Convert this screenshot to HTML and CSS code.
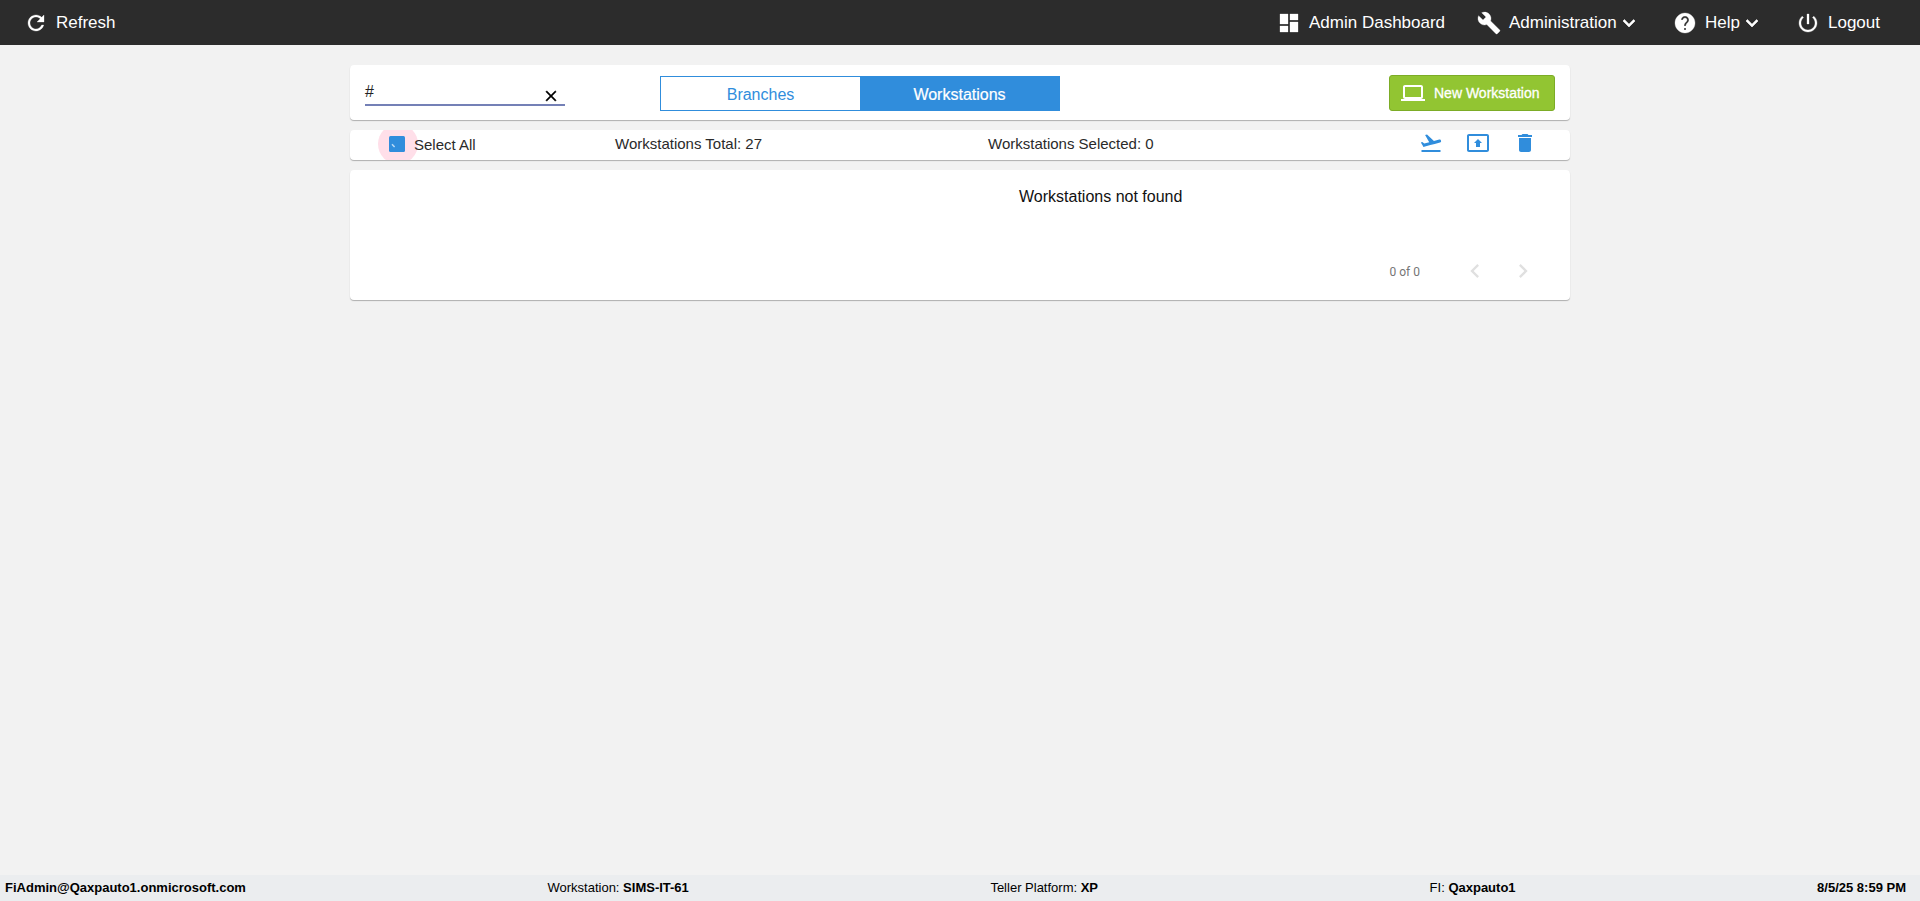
FILE: index.html
```
<!DOCTYPE html>
<html lang="en">
<head>
    <meta charset="UTF-8">
    <meta name="viewport" content="width=device-width, initial-scale=1.0">
    <title>Workstations</title>
    <link rel="stylesheet" href="styles.css">
</head>
<body>
    <header class="topbar">
        <a class="nav-item refresh">
            <svg class="icon" viewBox="0 0 24 24"><path d="M17.65 6.35C16.2 4.9 14.21 4 12 4c-4.42 0-7.99 3.58-7.99 8s3.57 8 7.99 8c3.73 0 6.84-2.55 7.73-6h-2.08c-.82 2.33-3.04 4-5.65 4-3.31 0-6-2.69-6-6s2.69-6 6-6c1.66 0 3.14.69 4.22 1.78L13 11h7V4l-2.35 2.35z"/></svg>
            <span>Refresh</span>
        </a>
        <nav class="menu">
            <a class="nav-item dashboard">
                <svg class="icon" viewBox="0 0 24 24"><path d="M3 13h8V3H3v10zm0 8h8v-6H3v6zm10 0h8V11h-8v10zm0-18v6h8V3h-8z"/></svg>
                <span>Admin Dashboard</span>
            </a>
            <a class="nav-item administration">
                <svg class="icon" viewBox="0 0 24 24"><path d="M22.7 19l-9.1-9.1c.9-2.3.4-5-1.5-6.9-2-2-5-2.4-7.4-1.3L9 6 6 9 1.6 4.7C.4 7.1.9 10.1 2.9 12.1c1.9 1.9 4.6 2.4 6.9 1.5l9.1 9.1c.4.4 1 .4 1.4 0l2.3-2.3c.5-.4.5-1.1.1-1.4z"/></svg>
                <span>Administration</span>
                <svg class="icon arrow" viewBox="0 0 24 24"><path d="M16.59 8.59L12 13.17 7.41 8.59 6 10l6 6 6-6z"/></svg>
            </a>
            <a class="nav-item help">
                <svg class="icon" viewBox="0 0 24 24"><path d="M12 2C6.48 2 2 6.48 2 12s4.48 10 10 10 10-4.48 10-10S17.52 2 12 2zm1 17h-2v-2h2v2zm2.07-7.75l-.9.92C13.45 12.9 13 13.5 13 15h-2v-.5c0-1.1.45-2.1 1.17-2.83l1.24-1.26c.37-.36.59-.86.59-1.41 0-1.1-.9-2-2-2s-2 .9-2 2H8c0-2.21 1.79-4 4-4s4 1.79 4 4c0 .88-.36 1.68-.93 2.25z"/></svg>
                <span>Help</span>
                <svg class="icon arrow" viewBox="0 0 24 24"><path d="M16.59 8.59L12 13.17 7.41 8.59 6 10l6 6 6-6z"/></svg>
            </a>
            <a class="nav-item logout">
                <svg class="icon" viewBox="0 0 24 24"><path d="M13 3h-2v10h2V3zm4.83 2.17l-1.42 1.42C17.99 7.86 19 9.81 19 12c0 3.87-3.13 7-7 7s-7-3.13-7-7c0-2.19 1.01-4.14 2.58-5.42L6.17 5.17C4.23 6.82 3 9.26 3 12c0 4.97 4.03 9 9 9s9-4.03 9-9c0-2.74-1.23-5.18-3.17-6.83z"/></svg>
                <span>Logout</span>
            </a>
        </nav>
    </header>

    <main class="container">
        <section class="card filter-bar">
            <div class="search">
                <span class="search-value">#</span>
                <svg class="clear" viewBox="0 0 24 24"><path d="M19 6.41L17.59 5 12 10.59 6.41 5 5 6.41 10.59 12 5 17.59 6.41 19 12 13.41 17.59 19 19 17.59 13.41 12z"/></svg>
            </div>
            <div class="tabs">
                <button class="tab-button">Branches</button>
                <button class="tab-button active">Workstations</button>
            </div>
            <button class="new-button">
                <svg class="icon" viewBox="0 0 24 24"><path d="M20 18c1.1 0 1.99-.9 1.99-2L22 6c0-1.1-.9-2-2-2H4c-1.1 0-2 .9-2 2v10c0 1.1.9 2 2 2H0v2h24v-2h-4zM4 6h16v10H4V6z"/></svg>
                <span>New Workstation</span>
            </button>
        </section>

        <section class="card select-bar">
            <div class="ripple">
                <svg class="checkbox" viewBox="0 0 16 16"><rect width="16" height="16" rx="1.5"/><path d="M3 8.2l2.6 2.9"/></svg>
            </div>
            <span class="select-all">Select All</span>
            <span class="total">Workstations Total: 27</span>
            <span class="selected">Workstations Selected: 0</span>
            <div class="actions">
                <svg class="icon" viewBox="0 0 24 24"><path d="M2.5 19h19v2h-19zm19.57-9.36c-.21-.8-1.04-1.28-1.84-1.06L14.92 10l-6.9-6.43-1.93.51 4.14 7.17-4.97 1.33-1.97-1.54-1.45.39 1.82 3.16.77 1.33 1.6-.43 5.31-1.42 4.35-1.16L21 11.49c.81-.23 1.28-1.05 1.07-1.85z"/></svg>
                <svg class="icon" viewBox="0 0 24 24"><path d="M21 3H3c-1.11 0-2 .89-2 2v14c0 1.11.89 2 2 2h18c1.11 0 2-.89 2-2V5c0-1.11-.89-2-2-2zm0 16.02H3V4.98h18v14.04zM10 12H8l4-4 4 4h-2v4h-4v-4z"/></svg>
                <svg class="icon" viewBox="0 0 24 24"><path d="M6 19c0 1.1.9 2 2 2h8c1.1 0 2-.9 2-2V7H6v12zM19 4h-3.5l-1-1h-5l-1 1H5v2h14V4z"/></svg>
            </div>
        </section>

        <section class="card list">
            <p class="empty">Workstations not found</p>
            <div class="paginator">
                <span class="range">0 of 0</span>
                <svg class="page-icon" viewBox="0 0 24 24"><path d="M15.41 7.41L14 6l-6 6 6 6 1.41-1.41L10.83 12z"/></svg>
                <svg class="page-icon" viewBox="0 0 24 24"><path d="M10 6L8.59 7.41 13.17 12l-4.58 4.59L10 18l6-6z"/></svg>
            </div>
        </section>
    </main>

    <footer class="statusbar">
        <b>FiAdmin@Qaxpauto1.onmicrosoft.com</b>
        <span>Workstation: <b>SIMS-IT-61</b></span>
        <span class="platform">Teller Platform: <b>XP</b></span>
        <span>FI: <b>Qaxpauto1</b></span>
        <b>8/5/25 8:59 PM</b>
    </footer>
</body>
</html>
```
FILE: styles.css
```
* {
    box-sizing: border-box;
}
body {
    font-family: "Liberation Sans", Arial, sans-serif;
    background-color: #f2f2f2;
    display: flex;
    flex-direction: column;
    height: 100vh;
    margin: 0;
    overflow: hidden;
}
svg {
    display: block;
    fill: currentColor;
    flex: none;
}
button {
    font-family: inherit;
    cursor: pointer;
}
.icon {
    width: 24px;
    height: 24px;
}

/* top bar */
.topbar {
    display: flex;
    justify-content: space-between;
    height: 45px;
    padding: 0 39px 0 24px;
    background-color: #2c2c2c;
    color: #fff;
    font-size: 17px;
}
.menu {
    display: flex;
}
.nav-item {
    display: flex;
    align-items: center;
    gap: 8px;
    white-space: nowrap;
}
.nav-item .icon {
    stroke: currentColor;
    stroke-width: 0.3px;
}
.dashboard {
    width: 200px;
}
.administration {
    width: 196px;
}
.help {
    width: 123px;
}
.logout {
    width: 85px;
}
.nav-item .arrow {
    margin-left: -8px;
    stroke-width: 0.6px;
}

/* cards */
.container {
    width: 1220px;
    margin: 20px auto 0;
    flex: 1;
}
.card {
    display: flex;
    background-color: #fff;
    border-radius: 4px;
    box-shadow: 0 1px 1px rgba(0, 0, 0, 0.28);
    margin-bottom: 10px;
}
.filter-bar {
    height: 55px;
    padding: 0 15px;
}
.search {
    display: flex;
    justify-content: space-between;
    width: 200px;
    height: 41px;
    border-bottom: 2px solid #7480b6;
    padding: 17px 5px 0 0;
    font-size: 16px;
    color: #222;
}
.search-value {
    line-height: 20px;
}
.clear {
    width: 18px;
    height: 18px;
    margin-top: 5px;
    color: #000;
    stroke: #000;
    stroke-width: 0.5px;
}
.tabs {
    display: flex;
    width: 400px;
    height: 35px;
    margin: 11px 0 0 95px;
    border: 1px solid #308ddc;
}
.tab-button {
    flex: 1;
    border: none;
    padding: 2px 0 0;
    background-color: #fff;
    color: #308ddc;
    font-size: 16px;
}
.tab-button.active {
    background-color: #308ddc;
    color: #fff;
    -webkit-text-stroke: 0.2px #fff;
}
.new-button {
    display: flex;
    align-items: center;
    gap: 9px;
    width: 166px;
    height: 36px;
    margin: 10px 0 0 auto;
    padding: 0 0 0 11px;
    background-color: #92c532;
    border: 1px solid #7cac26;
    border-radius: 3px;
    color: #fff;
    font-size: 14px;
    white-space: nowrap;
    -webkit-text-stroke: 0.3px #fff;
}

/* selection row */
.select-bar {
    height: 30px;
    overflow: hidden;
    font-size: 15px;
    line-height: 28px;
    color: #2a2a2a;
    white-space: nowrap;
}
.ripple {
    display: flex;
    align-items: center;
    justify-content: center;
    width: 40px;
    height: 40px;
    margin: -6px 0 0 28px;
    border-radius: 50%;
    background-color: #ffdfe9;
    flex: none;
}
.checkbox {
    width: 16px;
    height: 16px;
    margin: 0 2px 0 0;
    fill: #308ddc;
}
.checkbox path {
    fill: none;
    stroke: #b9daf5;
    stroke-width: 1.5;
}
.select-all {
    width: 201px;
    margin-left: -4px;
    padding-top: 1px;
}
.total {
    width: 373px;
}
.actions {
    display: flex;
    gap: 23px;
    margin: 1px 33px 0 auto;
    color: #308ddc;
}

/* list */
.list {
    flex-direction: column;
    height: 130px;
}
.empty {
    margin: 18px 0 0 669px;
    font-size: 16px;
    line-height: 18px;
    color: #111;
}
.paginator {
    display: flex;
    align-items: center;
    justify-content: flex-end;
    gap: 20px;
    margin: 51px 33px 0 0;
    color: #e0e0e0;
}
.range {
    font-family: Roboto, sans-serif;
    font-size: 12px;
    color: #757575;
    padding-top: 2px;
    margin-right: 21px;
}
.page-icon {
    width: 28px;
    height: 28px;
}

/* status bar */
.statusbar {
    display: flex;
    justify-content: space-between;
    height: 26px;
    padding: 0 14px 0 5px;
    background-color: #ebedef;
    font-size: 13px;
    line-height: 25px;
}
.platform {
    padding-right: 30px;
}
```
